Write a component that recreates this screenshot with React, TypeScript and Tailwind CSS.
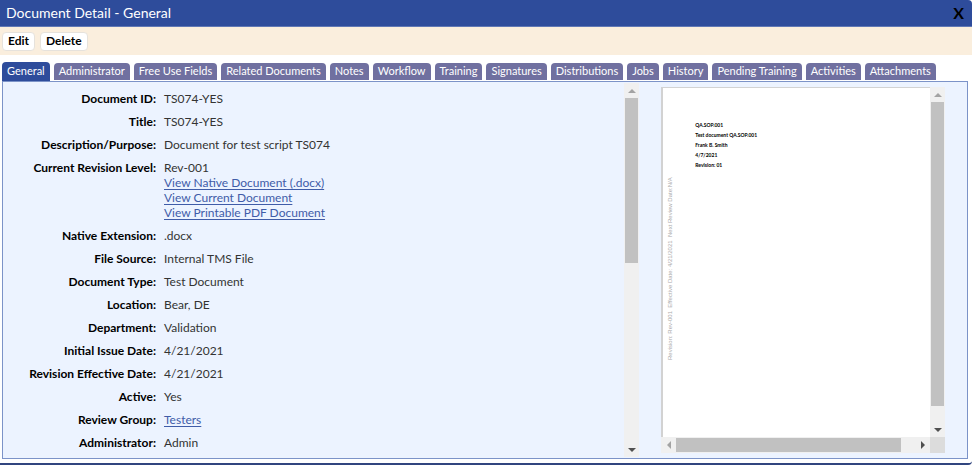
import { useState } from "react";
import type { ReactNode } from "react";
import clsx from "clsx";

const tabs = [
  "General", "Administrator", "Free Use Fields", "Related Documents", "Notes", "Workflow", "Training",
  "Signatures", "Distributions", "Jobs", "History", "Pending Training", "Activities", "Attachments",
];

const revisionLinks = ["View Native Document (.docx)", "View Current Document", "View Printable PDF Document"];

const DocLink = ({ children }: { children: ReactNode }) => (
  <a href="#" className="text-[#3f5ca8] underline underline-offset-2">{children}</a>
);

const fields: { label: string; value: ReactNode }[] = [
  { label: "Document ID", value: "TS074-YES" },
  { label: "Title", value: "TS074-YES" },
  { label: "Description/Purpose", value: "Document for test script TS074" },
  {
    label: "Current Revision Level",
    value: (
      <>
        Rev-001
        {revisionLinks.map(l => <div key={l}><DocLink>{l}</DocLink></div>)}
      </>
    ),
  },
  { label: "Native Extension", value: ".docx" },
  { label: "File Source", value: "Internal TMS File" },
  { label: "Document Type", value: "Test Document" },
  { label: "Location", value: "Bear, DE" },
  { label: "Department", value: "Validation" },
  { label: "Initial Issue Date", value: "4/21/2021" },
  { label: "Revision Effective Date", value: "4/21/2021" },
  { label: "Active", value: "Yes" },
  { label: "Review Group", value: <DocLink>Testers</DocLink> },
  { label: "Administrator", value: "Admin" },
];

const previewLines = ["QA.SOP.001", "Test document QA.SOP.001", "Frank B. Smith", "4/7/2021", "Revision: 01"];

const arrows = {
  up: "M0 4 L4 0 L8 4 Z",
  down: "M0 0 L8 0 L4 4 Z",
  left: "M4 0 L4 8 L0 4 Z",
  right: "M0 0 L4 4 L0 8 Z",
};

function Arrow({ dir, muted }: { dir: keyof typeof arrows; muted?: boolean }) {
  const vertical = dir === "up" || dir === "down";
  return (
    <svg width={vertical ? 8 : 4} height={vertical ? 4 : 8} className={muted ? "fill-[#a3a3a3]" : "fill-[#505050]"}>
      <path d={arrows[dir]} />
    </svg>
  );
}

// thumb is the share of the track it covers, in percent
function ScrollBar({ horizontal, thumb }: { horizontal?: boolean; thumb: number }) {
  return (
    <div className={clsx("flex bg-[#f0f0f0]", horizontal ? "h-4 flex-1" : "w-[15px] flex-col")}>
      <button aria-label="Scroll back" className={clsx("flex shrink-0 items-center justify-center", horizontal ? "w-[15px]" : "h-[15px]")}>
        <Arrow dir={horizontal ? "left" : "up"} muted />
      </button>
      <div className={clsx("flex flex-1", horizontal ? "py-px" : "flex-col px-px")}>
        <div className="bg-[#c1c1c1]" style={horizontal ? { width: `${thumb}%` } : { height: `${thumb}%` }} />
      </div>
      <button aria-label="Scroll forward" className={clsx("flex shrink-0 items-center justify-center", horizontal ? "w-[15px]" : "h-[15px]")}>
        <Arrow dir={horizontal ? "right" : "down"} />
      </button>
    </div>
  );
}

export default function App() {
  const [active, setActive] = useState("General");

  return (
    <div className="flex min-h-screen flex-col rounded-br border-b-2 border-[#31457f] bg-white font-[Lato,Carlito,sans-serif] text-[#333]">
      <header className="flex h-[27px] items-center justify-between rounded-tr-sm border-b border-[#6078b5] bg-[#2e4c9b] pr-2 pl-1.5">
        <h1 className="text-sm text-white">Document Detail - General</h1>
        <button aria-label="Close" className="text-base leading-none font-bold text-black">X</button>
      </header>

      <div className="flex h-7 items-center gap-[5px] bg-[#faeedd] px-0.5">
        {["Edit", "Delete"].map(label => (
          <button key={label} className="h-[19px] rounded border border-[#e6e2dc] bg-white px-[5px] text-xs leading-none font-bold text-black">{label}</button>
        ))}
      </div>

      <main className="flex flex-1 flex-col pt-[7px] pr-1 pb-1 pl-0.5">
        {/* Tabs */}
        <nav className="flex items-end gap-1 whitespace-nowrap">
          {tabs.map(t => (
            <button key={t} onClick={() => setActive(t)}
              className={clsx("rounded-t px-[5px] text-[11px] text-white", active === t ? "h-[19px] bg-[#2e4c9b]" : "mb-px h-[17px] bg-[#7070a0]")}>{t}</button>
          ))}
        </nav>

        <section className="flex flex-1 border border-[#7c93c8] bg-[#ecf3ff]">
          {/* Fields */}
          <div className="flex w-[66%] py-px">
            <div className="flex-1 pt-1">
              <table className="w-full text-[12px] leading-[15px]">
                <tbody>
                  {fields.map(({ label, value }) => (
                    <tr key={label}>
                      <th scope="row" className="w-[153px] py-1 text-right align-top font-bold whitespace-nowrap text-black">{label}:</th>
                      <td className="py-1 pl-2 align-top">{value}</td>
                    </tr>
                  ))}
                </tbody>
              </table>
            </div>
            <ScrollBar thumb={48} />
          </div>

          {/* Preview */}
          <div className="flex flex-1 flex-col pt-[5px] pr-[22px] pb-[5px] pl-[22px]">
            <div className="flex flex-1">
              <div className="flex flex-1 border-t border-l-2 border-[#d2d2d2] bg-white">
                <div className="mt-[92px] ml-1 h-[180px] rotate-180 text-[6px] leading-[7px] whitespace-pre text-[#aaa] [writing-mode:vertical-rl] font-['Liberation_Sans',sans-serif]">
                  {"Revision: Rev-001  Effective Date: 4/21/2021  Next Review Date:N/A"}
                </div>
                <div className="pt-8 pl-[21px] text-[5px] leading-[10px] font-bold text-black">
                  {previewLines.map(l => <p key={l}>{l}</p>)}
                </div>
              </div>
              <ScrollBar thumb={95} />
            </div>
            <div className="flex">
              <ScrollBar horizontal thumb={94} />
              <div className="w-[15px] bg-[#dcdcdc]" />
            </div>
          </div>
        </section>
      </main>
    </div>
  );
}
